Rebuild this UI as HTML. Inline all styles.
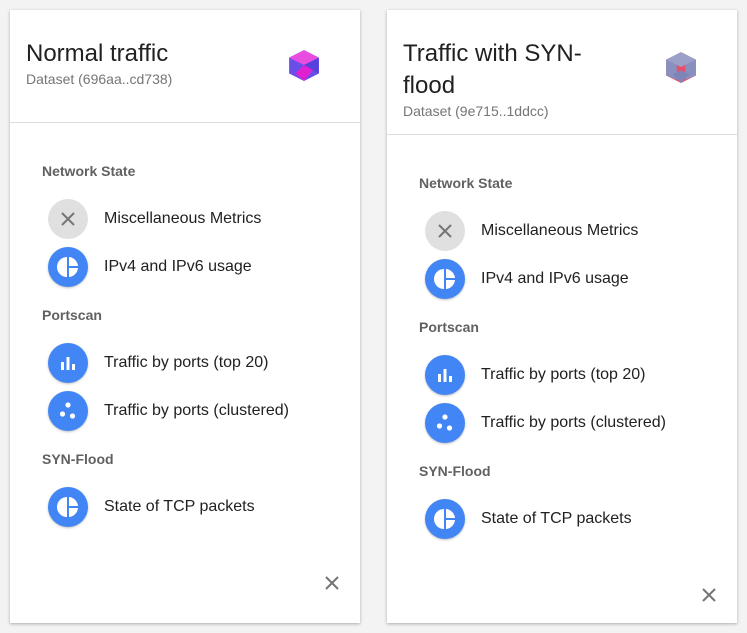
<!DOCTYPE html>
<html><head><style>
body{margin:0;background:#f3f3f3;font-family:"Liberation Sans",sans-serif;width:747px;height:633px;position:relative;overflow:hidden}
.card{position:absolute;top:10px;width:350px;height:613px;background:#fff;box-shadow:0 1px 3px rgba(0,0,0,.3)}
.hd{border-bottom:1px solid #ddd;position:relative;padding:28px 16px 0 16px}
.t{font-size:24px;color:#212121;line-height:32px;width:190px}
.s{font-size:14px;color:#757575;line-height:18px}
.cube{position:absolute;left:277px;top:38px}
.sec{position:absolute;left:32px;font-size:14px;color:#616161;font-weight:bold;transform:translateY(-9px)}
.it{position:absolute;left:38px;height:40px;display:flex;align-items:center}
.c{width:40px;height:40px;border-radius:50%;background:#4285f4;display:flex;align-items:center;justify-content:center;box-shadow:0 1px 2px rgba(0,0,0,.25)}
.c.g{background:#e0e0e0;box-shadow:none}
.lb{margin-left:16px;font-size:16px;color:#212121}
.x{position:absolute;left:313px}
</style></head><body>
<div class="card" style="left:10px">
<div class="hd" style="height:84px"><div class="t">Normal traffic</div><div class="s">Dataset (696aa..cd738)</div>
<svg class="cube" width="34" height="34" viewBox="0 0 32 32"><polygon points="16,2 30,9 30,24 16,31 2,24 2,9" fill="#6a4ee8"/><polygon points="16,2 30,9 16,16 2,9" fill="#e84de0"/><polygon points="16,16 25,20 16,31 8,24" fill="#e020d0"/><polygon points="16,16 30,9 30,24" fill="#5040d8" opacity=".8"/></svg></div>
<div id="a"></div>
</div>
<div class="card" style="left:387px">
<div class="hd" style="height:96px"><div class="t">Traffic with SYN-flood</div><div class="s">Dataset (9e715..1ddcc)</div>
<svg class="cube" width="34" height="34" viewBox="0 0 32 32" style="top:40px"><polygon points="16,2 30,9 30,24 16,31 2,24 2,9" fill="#e8506a"/><polygon points="16,2 30,9 16,16 2,9" fill="#9aa0c8"/><polygon points="2,9 12,14 12,28 2,24" fill="#8890c0"/><polygon points="30,9 20,14 20,28 30,24" fill="#8890c0"/><polygon points="16,19 24,23 16,31 8,23" fill="#7d85b8"/></svg></div>
</div>
<script>
const items=`<div class="sec" style="top:162px">Network State</div>
<div class="it" style="top:189px"><div class="c g"><svg width="16" height="16"><path d="M2 2L14 14M14 2L2 14" stroke="#757575" stroke-width="2"/></svg></div><span class="lb">Miscellaneous Metrics</span></div>
<div class="it" style="top:237px"><div class="c">PIE</div><span class="lb">IPv4 and IPv6 usage</span></div>
<div class="sec" style="top:306px">Portscan</div>
<div class="it" style="top:333px"><div class="c"><svg width="18" height="18"><rect x="2" y="8" width="3" height="8" fill="#fff"/><rect x="7.5" y="3" width="3" height="13" fill="#fff"/><rect x="13" y="10" width="3" height="6" fill="#fff"/></svg></div><span class="lb">Traffic by ports (top 20)</span></div>
<div class="it" style="top:381px"><div class="c"><svg width="20" height="20"><circle cx="10" cy="4" r="2.6" fill="#fff"/><circle cx="4.5" cy="13" r="2.6" fill="#fff"/><circle cx="14.5" cy="15" r="2.6" fill="#fff"/></svg></div><span class="lb">Traffic by ports (clustered)</span></div>
<div class="sec" style="top:450px">SYN-Flood</div>
<div class="it" style="top:477px"><div class="c">PIE</div><span class="lb">State of TCP packets</span></div>
<svg class="x" style="top:564px" width="18" height="18"><path d="M3 3L15 15M15 3L3 15" stroke="#757575" stroke-width="2"/></svg>`;
const pie='<svg width="22" height="22" viewBox="0 0 22 22"><path d="M10 1A10 10 0 0 0 10 21Z" fill="#fff"/><path d="M12 1A10 10 0 0 1 21 10H12Z" fill="#fff"/><path d="M12 12H21A10 10 0 0 1 12 21Z" fill="#fff"/></svg>';
const h=items.replace(/PIE/g,pie);
document.getElementById('a').outerHTML=h;
const c2=document.querySelectorAll('.card')[1];
const w=document.createElement('div');w.style.cssText='position:absolute;left:0;top:12px;width:350px';w.innerHTML=h;c2.appendChild(w);
</script>
</body></html>
